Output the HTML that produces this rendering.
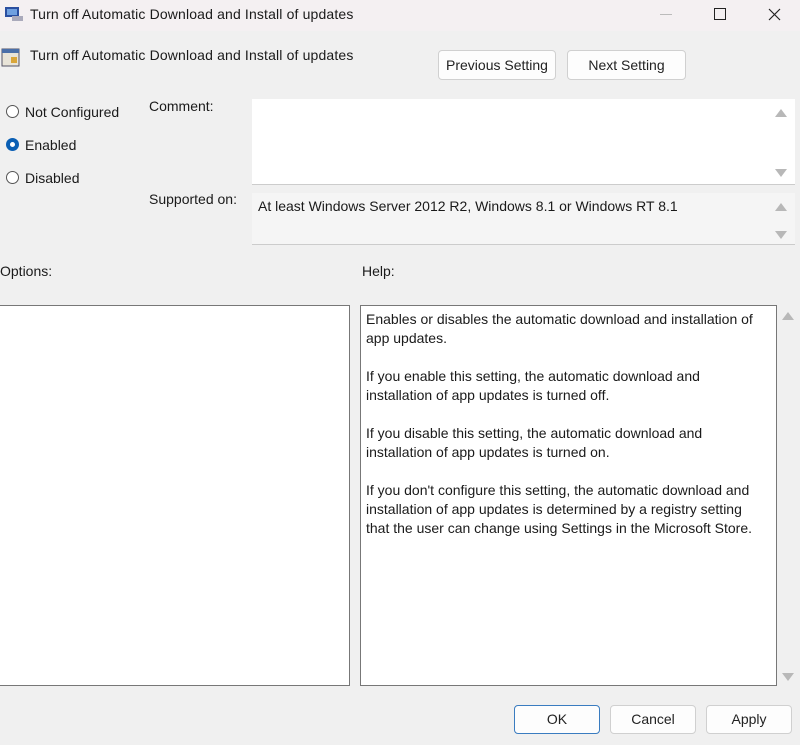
<!DOCTYPE html>
<html><head><meta charset="utf-8"><style>
body{margin:0;width:800px;height:745px;background:#f0f0f0;font-family:"Liberation Sans",sans-serif;font-size:14px;color:#1a1a1a;position:relative;overflow:hidden}
.a{position:absolute}
.title{left:0;top:0;width:800px;height:31px;background:#f4f0f2}
.btn{position:absolute;background:#fdfdfd;border:1px solid #d0d0d0;border-radius:4px;text-align:center;font-size:14px;color:#222;box-sizing:border-box}
.radio{position:absolute;width:13px;height:13px;border:1px solid #555;border-radius:50%;box-sizing:border-box;background:#fff}
.tri{position:absolute;width:0;height:0;border-left:6px solid transparent;border-right:6px solid transparent}
.up{border-bottom:8px solid #b8b8b8}.dn{border-top:8px solid #b8b8b8}
</style></head><body>
<div class="a title"></div>
<svg class="a" style="left:4px;top:5px" width="20" height="18"><rect x="1" y="2" width="14" height="10" fill="#2a4fa0"/><rect x="3" y="4" width="10" height="6" fill="#6fa0e0"/><rect x="8" y="11" width="11" height="5" fill="#aab"/></svg>
<div class="a" style="left:30px;top:6px;font-size:14px;letter-spacing:0.15px">Turn off Automatic Download and Install of updates</div>
<div class="a" style="left:660px;top:14px;width:12px;height:1px;background:#bbb"></div>
<div class="a" style="left:714px;top:8px;width:10px;height:10px;border:1px solid #222"></div>
<svg class="a" style="left:768px;top:8px" width="13" height="13"><path d="M1 1L12 12M12 1L1 12" stroke="#222" stroke-width="1.2"/></svg>
<svg class="a" style="left:1px;top:48px" width="20" height="20"><rect x="1" y="1" width="17" height="17" fill="#e8e4d8" stroke="#556"/><rect x="1" y="1" width="17" height="4" fill="#4a6fa8"/><rect x="10" y="9" width="6" height="6" fill="#d9a63a"/></svg>
<div class="a" style="left:30px;top:47px;letter-spacing:0.15px">Turn off Automatic Download and Install of updates</div>
<div class="btn" style="left:438px;top:50px;width:118px;height:30px;line-height:28px">Previous Setting</div>
<div class="btn" style="left:567px;top:50px;width:119px;height:30px;line-height:28px">Next Setting</div>
<div class="radio" style="left:6px;top:105px"></div><div class="a" style="left:25px;top:104px">Not Configured</div>
<div class="radio" style="left:6px;top:138px;border:4px solid #0a5fb4"></div><div class="a" style="left:25px;top:137px">Enabled</div>
<div class="radio" style="left:6px;top:171px"></div><div class="a" style="left:25px;top:170px">Disabled</div>
<div class="a" style="left:149px;top:98px">Comment:</div>
<div class="a" style="left:149px;top:191px">Supported on:</div>
<div class="a" style="left:252px;top:99px;width:543px;height:85px;background:#fff;border-bottom:1px solid #ccc"></div>
<div class="tri up" style="left:775px;top:109px"></div><div class="tri dn" style="left:775px;top:169px"></div>
<div class="a" style="left:252px;top:193px;width:543px;height:51px;background:#f5f5f5;border-bottom:1px solid #ccc"></div>
<div class="a" style="left:258px;top:198px">At least Windows Server 2012 R2, Windows 8.1 or Windows RT 8.1</div>
<div class="tri up" style="left:775px;top:203px"></div><div class="tri dn" style="left:775px;top:231px"></div>
<div class="a" style="left:0;top:263px">Options:</div>
<div class="a" style="left:362px;top:263px">Help:</div>
<div class="a" style="left:-1px;top:305px;width:351px;height:381px;background:#fff;border:1px solid #777;box-sizing:border-box"></div>
<div class="a" style="left:360px;top:305px;width:417px;height:381px;background:#fff;border:1px solid #777;box-sizing:border-box;padding:4px 14px 4px 5px;line-height:19px">
<div>Enables or disables the automatic download and installation of app updates.</div><br>
<div>If you enable this setting, the automatic download and installation of app updates is turned off.</div><br>
<div>If you disable this setting, the automatic download and installation of app updates is turned on.</div><br>
<div>If you don't configure this setting, the automatic download and installation of app updates is determined by a registry setting that the user can change using Settings in the Microsoft Store.</div>
</div>
<div class="tri up" style="left:782px;top:312px"></div><div class="tri dn" style="left:782px;top:673px"></div>
<div class="btn" style="left:514px;top:705px;width:86px;height:29px;line-height:27px;border:1px solid #3a7cc0">OK</div>
<div class="btn" style="left:610px;top:705px;width:86px;height:29px;line-height:27px">Cancel</div>
<div class="btn" style="left:706px;top:705px;width:86px;height:29px;line-height:27px">Apply</div>
</body></html>
